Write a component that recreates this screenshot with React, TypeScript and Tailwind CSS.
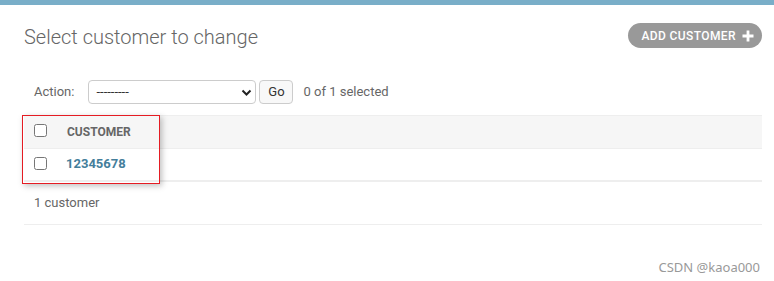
import { useState } from 'react';

const font = { fontFamily: 'Roboto, "Liberation Sans", sans-serif' };

const App = () => {
  const [rowChecked, setRowChecked] = useState(false);
  const [allChecked, setAllChecked] = useState(false);

  return (
    <div className="relative w-[774px] h-[281px] bg-white overflow-hidden text-[#333]" style={font}>
      {/* Header strip */}
      <div className="h-[5px] bg-[#79aec8]"></div>

      <div className="pl-6 pr-3">
        {/* Title + object tools */}
        <div className="flex items-start justify-between pt-[18px]">
          <h1 className="text-[20px] font-light text-[#666] leading-[30px] mt-[-1px]">Select customer to change</h1>
          <a className="flex items-center gap-[6px] h-[25px] rounded-full bg-[#999] pl-[13px] pr-[8px] text-white text-[12px] font-medium tracking-[0.4px] uppercase">
            ADD CUSTOMER
            <svg className="w-[12px] h-[12px]" viewBox="0 0 12 12" fill="#fff">
              <path d="M4.6 0.5h2.8v4.1h4.1v2.8H7.4v4.1H4.6V7.4H0.5V4.6h4.1z" />
            </svg>
          </a>
        </div>

        {/* Actions */}
        <div className="flex items-center h-[25px] mt-[27px] pl-[10px] text-[13px] text-[#666]">
          <label className="mr-[14px]">Action:</label>
          <div className="relative w-[168px] h-[24px] rounded-[4px] border border-[#ccc] bg-white flex items-center pl-[7px] text-[#333]">
            ---------
            <svg className="absolute right-[3px] top-[7px] w-[11px] h-[9px]" viewBox="0 0 11 9" fill="none" stroke="#222" strokeWidth={2}>
              <path d="M1.5 2.5l4 4 4-4" />
            </svg>
          </div>
          <button className="ml-[3px] w-[34px] h-[24px] rounded-[4px] border border-[#ccc] bg-[#f8f8f8] text-[13px] text-[#333] pt-[1px]">Go</button>
          <span className="ml-[10px]">0 of 1 selected</span>
        </div>

        {/* Results table */}
        <div className="mt-[11px]">
          <div className="flex items-center h-[34px] bg-[#f6f6f6] border-t border-b border-[#eee]">
            <div className="w-[43px] pl-[10px] flex items-center mb-[3px]">
              <input
                type="checkbox"
                checked={allChecked}
                onChange={() => setAllChecked(!allChecked)}
                className="w-[13px] h-[13px] m-0"
              />
            </div>
            <span className="text-[12px] font-bold text-[#666] uppercase mb-[1px]">Customer</span>
          </div>
          <div className="flex items-center h-[33px] border-b-2 border-[#eee]">
            <div className="w-[42px] pl-[10px] flex items-center mb-[3px]">
              <input
                type="checkbox"
                checked={rowChecked}
                onChange={() => setRowChecked(!rowChecked)}
                className="w-[13px] h-[13px] m-0"
              />
            </div>
            <a className="text-[13px] font-bold text-[#447e9b] mb-[1px]">12345678</a>
          </div>
        </div>

        {/* Paginator */}
        <div className="h-[43px] flex items-center pl-[10px] text-[13px] text-[#666] border-b border-[#eee]">1 customer</div>
      </div>

      {/* Annotation box */}
      <div className="absolute left-[22px] top-[115px] w-[138px] h-[69px] border border-[#e51c23] shadow-[2px_2px_6px_rgba(0,0,0,0.25)]"></div>

      {/* Watermark */}
      <div className="absolute right-[14px] top-[258px] text-[13px] text-[#999]" style={{ fontFamily: '"Noto Sans", sans-serif' }}>
        CSDN @kaoa000
      </div>
    </div>
  );
};

export default App;
